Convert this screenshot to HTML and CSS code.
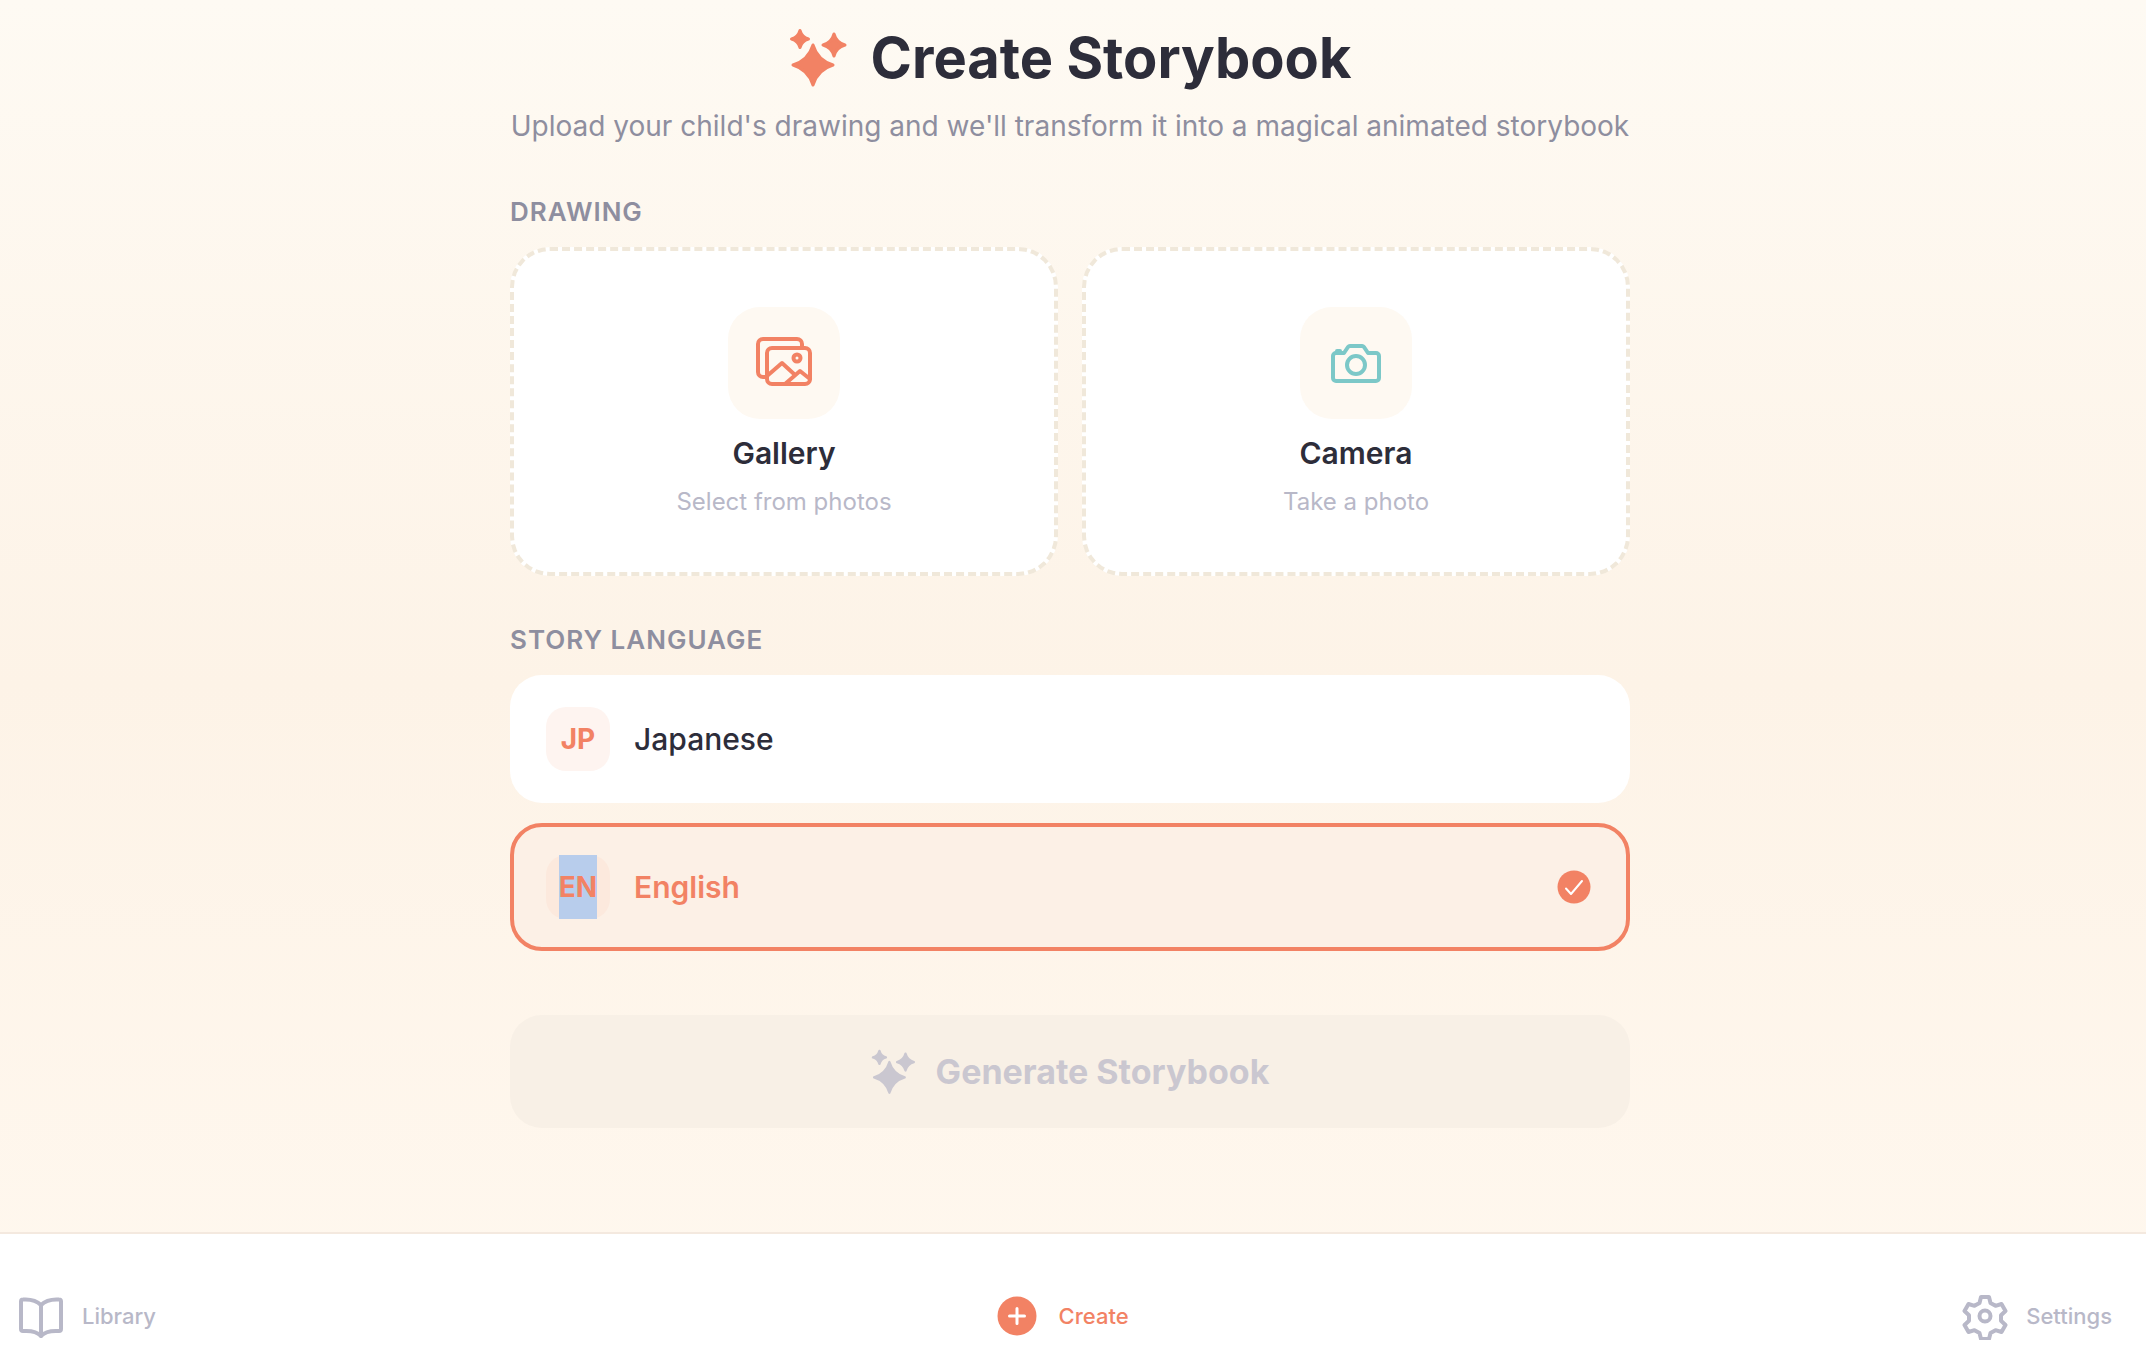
FILE: index.html
```html
<!DOCTYPE html>
<html lang="en">
<head>
    <meta charset="UTF-8">
    <title>Create Storybook</title>
    <link rel="stylesheet" href="styles.css">
</head>
<body>

    <svg class="defs" width="0" height="0">
        <symbol id="sparkles" viewBox="0 0 60 60">
            <path d="M24 17 C27 27 34 34 44 37 C34 40 27 47 24 57 C21 47 14 40 4 37 C14 34 21 27 24 17 Z"/>
            <path d="M11 2.500 C12.200 7 15 9.800 19.500 11 C15 12.200 12.200 15 11 19.500 C9.800 15 7 12.200 2.500 11 C7 9.800 9.800 7 11 2.500 Z"/>
            <path d="M45 6 C46.500 11.700 50.300 15.500 56 17 C50.300 18.500 46.500 22.300 45 28 C43.500 22.300 39.700 18.500 34 17 C39.700 15.500 43.500 11.700 45 6 Z"/>
        </symbol>
    </svg>

    <main class="container">
        <header class="page-header">
            <h1 class="page-title">
                <svg class="title-icon"><use href="#sparkles"/></svg>
                Create Storybook
            </h1>
            <p class="page-subtitle">Upload your child's drawing and we'll transform it into a magical animated storybook</p>
        </header>

        <!-- Drawing -->
        <section class="section">
            <h2 class="section-label">DRAWING</h2>
            <div class="source-grid">
                <div class="source-card">
                    <div class="source-icon">
                        <svg class="icon-gallery" viewBox="0 0 60 56">
                            <path d="M48 13 V9 a5 5 0 0 0 -5 -5 H9 a5 5 0 0 0 -5 5 V37 a5 5 0 0 0 5 5 h4"/>
                            <rect x="13" y="13" width="43" height="36" rx="5"/>
                            <circle cx="43" cy="23" r="3.500"/>
                            <path d="M13 41 L28 28 L40 39"/>
                            <path d="M31 49 L46 36 L56 44"/>
                        </svg>
                    </div>
                    <div class="source-title">Gallery</div>
                    <div class="source-sub">Select from photos</div>
                </div>
                <div class="source-card">
                    <div class="source-icon">
                        <svg class="icon-camera" viewBox="0 0 54 43">
                            <path d="M7 11 h8 l4 -6 a3 3 0 0 1 2 -1 h12 a3 3 0 0 1 2 1 l4 6 h8 a3 3 0 0 1 3 3 v22 a3 3 0 0 1 -3 3 H7 a3 3 0 0 1 -3 -3 V14 a3 3 0 0 1 3 -3 Z"/>
                            <path d="M8 9 h3"/>
                            <circle cx="27" cy="23" r="9"/>
                        </svg>
                    </div>
                    <div class="source-title">Camera</div>
                    <div class="source-sub">Take a photo</div>
                </div>
            </div>
        </section>

        <!-- Story language -->
        <section class="section">
            <h2 class="section-label">STORY LANGUAGE</h2>
            <div class="lang-list">
                <div class="lang-row">
                    <span class="lang-badge">JP</span>
                    <span class="lang-name">Japanese</span>
                </div>
                <div class="lang-row selected">
                    <span class="lang-badge"><span class="text-selected">EN</span></span>
                    <span class="lang-name">English</span>
                    <svg class="lang-check" viewBox="0 0 40 40">
                        <circle cx="20" cy="20" r="16.500"/>
                        <path d="M12 21.500 L17 27 L28 14"/>
                    </svg>
                </div>
            </div>
        </section>

        <button class="generate-btn">
            <svg class="generate-icon"><use href="#sparkles"/></svg>
            Generate Storybook
        </button>
    </main>

    <nav class="tab-bar">
        <div class="tab-item">
            <svg class="tab-icon" viewBox="0 0 48 48">
                <path d="M24 13 C20 9 13 7 6 7.500 a2 2 0 0 0 -2 2 V37 a2 2 0 0 0 2 2 C13 38.500 20 39.500 24 44 C28 39.500 35 38.500 42 39 a2 2 0 0 0 2 -2 V9.500 a2 2 0 0 0 -2 -2 C35 7 28 9 24 13 Z"/>
                <path d="M24 13 V44"/>
            </svg>
            <span class="tab-label">Library</span>
        </div>
        <div class="tab-item active">
            <svg class="tab-plus" viewBox="0 0 40 40">
                <circle cx="20" cy="20" r="19.500"/>
                <path d="M20 12.500 V27.500 M12.500 20 H27.500"/>
            </svg>
            <span class="tab-label">Create</span>
        </div>
        <div class="tab-item">
            <svg class="tab-icon" viewBox="0 0 48 48">
                <path d="M20 5 h8 l1.500 6 l5 2.800 l6 -1.800 l4 7 l-4.500 4.200 v5.600 l4.500 4.200 l-4 7 l-6 -1.800 l-5 2.800 l-1.500 6 h-8 l-1.500 -6 l-5 -2.800 l-6 1.800 l-4 -7 l4.500 -4.200 v-5.600 l-4.500 -4.200 l4 -7 l6 1.800 l5 -2.800 Z"/>
                <circle cx="24" cy="24" r="5.500"/>
            </svg>
            <span class="tab-label">Settings</span>
        </div>
    </nav>

</body>
</html>
```

FILE: styles.css
```css
/* --- Base --- */
* {
    margin: 0;
    padding: 0;
    box-sizing: border-box;
}

html, body {
    height: 100%;
}

body {
    font-family: 'Inter', 'Liberation Sans', sans-serif;
    color: #2d2d3a;
    background-image: linear-gradient(180deg, #fefaf3 0%, #fdf3e7 50%, #fff8ef 100%);
    display: flex;
    flex-direction: column;
    overflow: hidden;
}

.defs {
    position: absolute;
}

/* --- Main column --- */
.container {
    flex: 1;
    width: 1120px;
    margin-left: 510px;
    padding-top: 22px;
}

.page-header {
    text-align: center;
}

.page-title {
    display: flex;
    justify-content: center;
    align-items: center;
    gap: 22px;
    font-size: 56px;
    line-height: 72px;
    font-weight: 700;
    color: #2d2d3a;
}

.title-icon {
    width: 60px;
    height: 60px;
    fill: #f28264;
    stroke: #f28264;
    stroke-width: 3;
    stroke-linejoin: round;
}

.page-subtitle {
    font-size: 28px;
    line-height: 44px;
    color: #8e8e9f;
    margin-top: 10px;
}

/* --- Sections --- */
.section-label {
    font-size: 26px;
    line-height: 36px;
    font-weight: 600;
    letter-spacing: 1px;
    color: #8e8e9f;
    margin-bottom: 17px;
}

.section {
    margin-top: 46px;
}

.source-grid {
    display: grid;
    grid-template-columns: 1fr 1fr;
    gap: 24px;
}

.source-card {
    height: 329px;
    background-color: #ffffff;
    border: 4px dashed #f0e8da;
    border-radius: 40px;
    padding-top: 56px;
    display: flex;
    flex-direction: column;
    align-items: center;
}

.source-icon {
    width: 112px;
    height: 112px;
    background-color: #fef9f2;
    border-radius: 32px;
    display: flex;
    align-items: center;
    justify-content: center;
}

.source-icon svg {
    fill: none;
    stroke-width: 4;
    stroke-linecap: round;
    stroke-linejoin: round;
}

.icon-gallery {
    width: 60px;
    height: 56px;
    stroke: #f28264;
}

.icon-camera {
    width: 54px;
    height: 43px;
    stroke: #7cc8c8;
}

.source-title {
    font-size: 30px;
    line-height: 40px;
    font-weight: 600;
    margin-top: 14px;
}

.source-sub {
    font-size: 24px;
    line-height: 36px;
    color: #b8b8c8;
    margin-top: 11px;
}

/* --- Language rows --- */
.lang-list {
    display: flex;
    flex-direction: column;
    gap: 20px;
}

.lang-row {
    height: 128px;
    background-color: #ffffff;
    border: 4px solid transparent;
    border-radius: 32px;
    padding: 0 32px;
    display: flex;
    align-items: center;
    gap: 24px;
}

.lang-badge {
    width: 64px;
    height: 64px;
    background-color: #fef4f0;
    border-radius: 20px;
    color: #f28264;
    font-size: 28px;
    font-weight: 700;
    display: flex;
    align-items: center;
    justify-content: center;
}

.lang-name {
    flex: 1;
    font-size: 30px;
    font-weight: 500;
}

.lang-row.selected {
    background-color: #fcf0e6;
    border-color: #f28264;
}

.selected .lang-badge {
    background-color: #fce9dd;
}

.selected .lang-name {
    color: #f28264;
    font-weight: 600;
}

.text-selected {
    background-color: #b8cdec;
    line-height: 64px;
}

.lang-check {
    width: 40px;
    height: 40px;
}

.lang-check circle {
    fill: #f28264;
}

.lang-check path {
    fill: none;
    stroke: #ffffff;
    stroke-width: 2;
    stroke-linecap: round;
    stroke-linejoin: round;
}

/* --- Generate button --- */
.generate-btn {
    width: 100%;
    height: 113px;
    margin-top: 64px;
    border: none;
    border-radius: 32px;
    background-color: #f8f0e6;
    color: #cac7d0;
    font-family: inherit;
    font-size: 34px;
    font-weight: 700;
    display: flex;
    align-items: center;
    justify-content: center;
    gap: 19px;
}

.generate-icon {
    width: 46px;
    height: 46px;
    fill: #cac7d0;
    stroke: #cac7d0;
    stroke-width: 3;
    stroke-linejoin: round;
}

/* --- Tab bar --- */
.tab-bar {
    height: 134px;
    background-color: #ffffff;
    border-top: 2px solid #f4e9df;
    padding: 58px 34px 0 17px;
    display: flex;
    justify-content: space-between;
    align-items: flex-start;
}

.tab-item {
    display: flex;
    align-items: center;
    gap: 17px;
    height: 48px;
    color: #b8b8c8;
}

.tab-item.active {
    color: #f28264;
    gap: 22px;
    margin-left: 8px;
}

.tab-label {
    font-size: 22px;
    font-weight: 500;
}

.tab-icon {
    width: 48px;
    height: 48px;
    fill: none;
    stroke: #b8b8c8;
    stroke-width: 4;
    stroke-linecap: round;
    stroke-linejoin: round;
}

.tab-plus {
    width: 40px;
    height: 40px;
}

.tab-plus circle {
    fill: #f28264;
}

.tab-plus path {
    fill: none;
    stroke: #ffffff;
    stroke-width: 3;
    stroke-linecap: round;
}
```
